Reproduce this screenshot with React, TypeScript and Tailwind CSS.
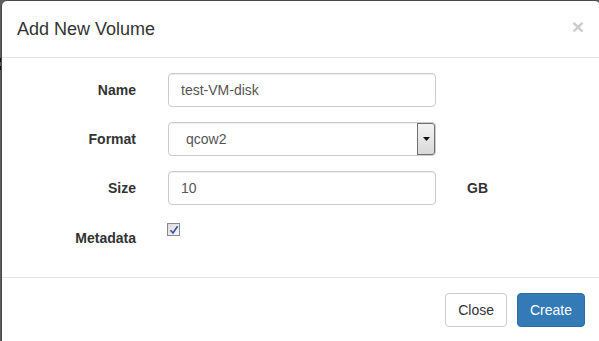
import React from "react";

const font = { fontFamily: '"Liberation Sans", Arial, Helvetica, sans-serif' };

function Row({ label, children, extra }: { label: string; children: React.ReactNode; extra?: React.ReactNode }) {
  return (
    <div className="flex items-center h-[34px] mb-[15px]">
      <label className="w-[119px] text-right font-bold text-[14px] text-[#333]">{label}</label>
      <div className="ml-[32px] w-[268px]">{children}</div>
      {extra}
    </div>
  );
}

function TextBox({ value }: { value: string }) {
  return (
    <div className="h-[34px] w-full rounded-[4px] border border-[#ccc] px-[12px] flex items-center text-[14px] text-[#555] shadow-[inset_0_1px_1px_rgba(0,0,0,0.075)]">
      {value}
    </div>
  );
}

export default function App() {
  return (
    <div className="w-[599px] h-[341px] overflow-hidden bg-[#5e5e5e] relative" style={font}>
      <div className="absolute left-0 top-[58px] w-[1px] h-[4px] bg-[#111]" />
      <div className="absolute left-0 top-[66px] w-[1px] h-[4px] bg-[#111]" />
      <div className="ml-[1px] w-[600px] h-[360px] bg-white rounded-[6px] border border-[#4a4a4a]">
        {/* header */}
        <div className="h-[57px] px-[15px] flex items-center justify-between border-b border-[#e5e5e5]">
          <h4 className="text-[18px] leading-[26px] text-[#333]">Add New Volume</h4>
          <span className="text-[21px] font-bold leading-none text-black opacity-20 mr-[1px] -mt-[5px]">×</span>
        </div>

        {/* body */}
        <div className="h-[219px] px-[15px] pt-[15px]">
          <Row label="Name">
            <TextBox value="test-VM-disk" />
          </Row>
          <Row label="Format">
            <div className="h-[34px] w-full rounded-[4px] border border-[#ccc] flex items-center text-[14px] text-[#555] shadow-[inset_0_1px_1px_rgba(0,0,0,0.075)]">
              <span className="pl-[17px] flex-1">qcow2</span>
              <div className="w-[18px] h-[32px] border-l border-[#888] bg-gradient-to-b from-[#f4f4f4] to-[#d8d8d8] flex items-center justify-center rounded-r-[3px] outline outline-1 outline-[#707070] -outline-offset-1">
                <svg width="7" height="4" viewBox="0 0 7 4">
                  <path d="M0 0h7L3.5 4z" fill="#111" />
                </svg>
              </div>
            </div>
          </Row>
          <Row label="Size" extra={<label className="ml-[31px] font-bold text-[14px] text-[#333]">GB</label>}>
            <TextBox value="10" />
          </Row>
          <div className="flex h-[34px]">
            <label className="w-[119px] text-right font-bold text-[14px] text-[#333] pt-[8px]">Metadata</label>
            <div className="ml-[31px] pt-[3px]">
              <div className="w-[13px] h-[13px] border border-[#8a8a8a] bg-gradient-to-br from-[#dcdcdc] to-[#f6f6f6] flex items-center justify-center">
                <svg width="10" height="10" viewBox="0 0 10 10">
                  <path d="M1.5 5.2L4 8L8.6 1.2" stroke="#3250a8" strokeWidth="1.6" fill="none" />
                </svg>
              </div>
            </div>
          </div>
        </div>

        {/* footer */}
        <div className="border-t border-[#e5e5e5] p-[15px] flex justify-end gap-[10px]" style={{ paddingRight: 15 }}>
          <button className="h-[34px] px-[12px] rounded-[4px] border border-[#ccc] bg-white text-[14px] text-[#333]">Close</button>
          <button className="h-[34px] px-[12px] rounded-[4px] border border-[#2e6da4] bg-[#337ab7] text-[14px] text-white">Create</button>
        </div>
      </div>
    </div>
  );
}
